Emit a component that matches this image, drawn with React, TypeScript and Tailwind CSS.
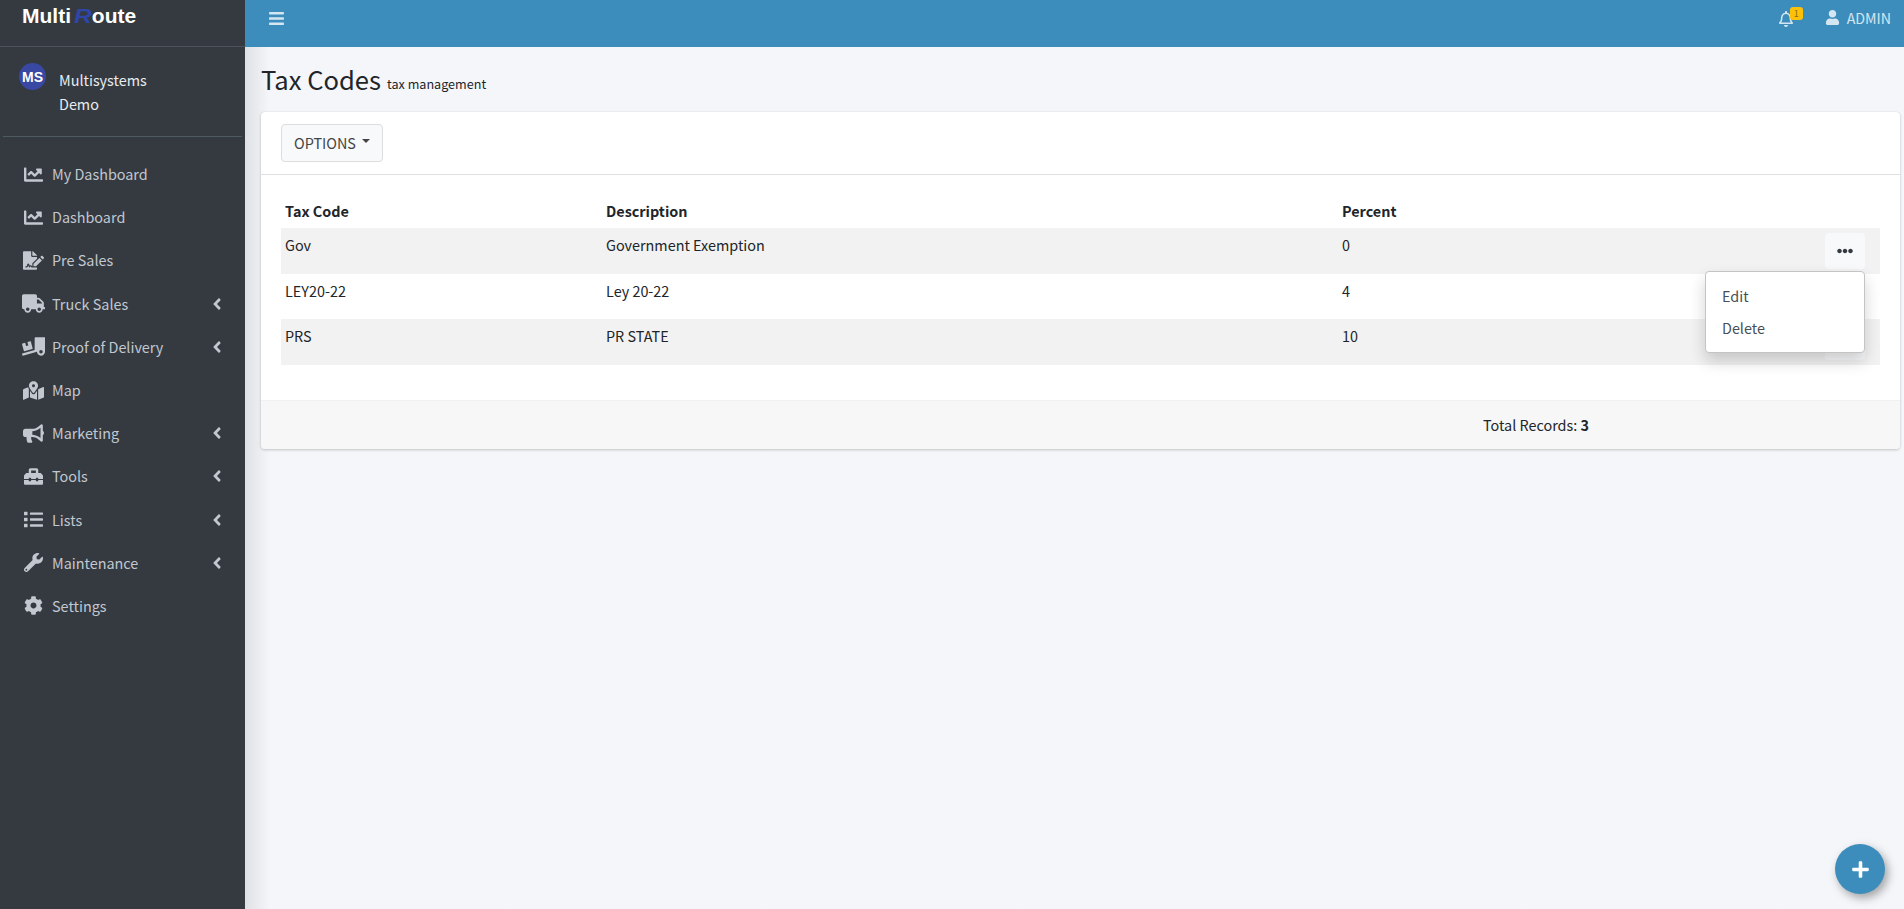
import type { ReactNode } from "react";
import {
  FaAngleLeft,
  FaBars,
  FaBullhorn,
  FaChartLine,
  FaCog,
  FaEllipsisH,
  FaFileSignature,
  FaList,
  FaMapMarkedAlt,
  FaPlus,
  FaRegBell,
  FaToolbox,
  FaTruck,
  FaTruckLoading,
  FaUser,
  FaWrench,
} from "react-icons/fa";

const sans = "font-['Noto_Sans_CJK_SC','Source_Sans_Pro',sans-serif]";

const menu: { label: string; icon: ReactNode; arrow?: boolean }[] = [
  { label: "My Dashboard", icon: <FaChartLine className="text-[19px]" /> },
  { label: "Dashboard", icon: <FaChartLine className="text-[19px]" /> },
  { label: "Pre Sales", icon: <FaFileSignature className="text-[21px]" /> },
  { label: "Truck Sales", icon: <FaTruck className="text-[23px]" />, arrow: true },
  { label: "Proof of Delivery", icon: <FaTruckLoading className="text-[23px]" />, arrow: true },
  { label: "Map", icon: <FaMapMarkedAlt className="text-[21px]" /> },
  { label: "Marketing", icon: <FaBullhorn className="text-[21px]" />, arrow: true },
  { label: "Tools", icon: <FaToolbox className="text-[19px]" />, arrow: true },
  { label: "Lists", icon: <FaList className="text-[19px]" />, arrow: true },
  { label: "Maintenance", icon: <FaWrench className="text-[19px]" />, arrow: true },
  { label: "Settings", icon: <FaCog className="text-[19px]" /> },
];

const rows = [
  { code: "Gov", description: "Government Exemption", percent: "0" },
  { code: "LEY20-22", description: "Ley 20-22", percent: "4" },
  { code: "PRS", description: "PR STATE", percent: "10" },
];

function Sidebar() {
  return (
    <aside className="flex w-[245px] shrink-0 flex-col bg-[#343a40] text-[#c2c7d0]">
      <div className="flex h-[47px] items-start border-b border-[#4b545c] pl-[22px]">
        <span className="font-['Liberation_Sans',sans-serif] text-[21px] font-bold leading-[32px] text-white">
          Multi
          <span className="ml-[3px] mr-[2.7px] inline-block origin-left scale-x-[1.18] italic text-[#2f45a8]">R</span>
          oute
        </span>
      </div>
      <div className="mx-[3px] flex h-[90px] items-start border-b border-[#4f5962] pl-4 pt-4">
        <div className="flex h-[27px] w-[27px] items-center justify-center rounded-full bg-[#3949a3] font-['Liberation_Sans',sans-serif] text-[14px] font-bold leading-none text-white">
          MS
        </div>
        <div className="ml-[13px] mt-[5px] text-[14.4px] leading-[24px] text-[#e9ecef]">
          <div>Multisystems</div>
          <div>Demo</div>
        </div>
      </div>
      <nav className="pt-[15.5px]">
        {menu.map((item) => (
          <div key={item.label} className="flex h-[43.2px] items-center pl-[21.5px] pr-[19.5px]">
            <span className="mr-[7.5px] flex w-[23px] shrink-0 justify-center">{item.icon}</span>
            <span className="text-[14.4px] leading-6">{item.label}</span>
            {item.arrow && <FaAngleLeft className="ml-auto text-[18px]" />}
          </div>
        ))}
      </nav>
    </aside>
  );
}

function TopBar() {
  return (
    <header className="flex h-[47px] shrink-0 items-start bg-[#3c8dbc] pl-[23px] pr-[13px] text-[#d4e6f1]">
      <FaBars className="mt-[10px] text-[17px]" />
      <div className="relative ml-auto mr-[31px] mt-[11px] text-[16px]">
        <FaRegBell />
        <span className="absolute left-[12px] top-[-4px] flex h-[13px] w-[13px] items-center justify-center rounded-[3px] bg-[#ffc107] text-[9px] leading-none text-[#8a6d1a]">
          1
        </span>
      </div>
      <FaUser className="mt-[10px] text-[15px]" />
      <span className="ml-[7px] mt-[6px] text-[14.2px] leading-[24px]">ADMIN</span>
    </header>
  );
}

function TaxTable() {
  return (
    <table className="w-full table-fixed border-collapse text-[14.4px] text-[#212529]">
      <thead>
        <tr className="h-[40px] text-left">
          <th className="w-[321px] px-1 pt-[6px] font-bold">Tax Code</th>
          <th className="w-[736px] px-1 pt-[6px] font-bold">Description</th>
          <th className="px-1 pt-[6px] font-bold">Percent</th>
          <th className="w-[60px]" />
        </tr>
      </thead>
      <tbody>
        {rows.map((row, index) => (
          <tr key={row.code} className={`h-[45.5px] ${index % 2 === 0 ? "bg-[#f2f2f2]" : "bg-white"}`}>
            <td className="px-1 pb-[11px] align-middle leading-6">{row.code}</td>
            <td className="px-1 pb-[11px] align-middle leading-6">{row.description}</td>
            <td className="px-1 pb-[11px] align-middle leading-6">{row.percent}</td>
            <td className="align-middle">
              {index !== 1 && (
                <button className="mr-[15px] ml-auto flex h-[36px] w-[40px] items-center justify-center rounded-[4px] bg-[#f8f9fa] text-[16px] text-[#343a40]">
                  <FaEllipsisH />
                </button>
              )}
            </td>
          </tr>
        ))}
      </tbody>
    </table>
  );
}

export default function App() {
  return (
    <div className={`${sans} flex h-[909px] w-[1904px] overflow-hidden bg-[#f4f6f9]`}>
      <Sidebar />
      <main className="relative flex min-w-0 flex-1 flex-col">
        <TopBar />
        <div className="flex-1 bg-gradient-to-r from-[#dfe1e5] from-0% to-[#f4f6f9] to-[1.5%] pl-4 pr-1">
          <div className="flex h-[65px] items-end pb-[16px] text-[#212529]">
            <h1 className="text-[25.6px] font-normal leading-[34px]">Tax Codes</h1>
            <small className="ml-[6px] text-[12.6px] leading-[24px]">tax management</small>
          </div>
          <section className="relative rounded-[4px] bg-white shadow-[0_0_1px_rgba(0,0,0,0.13),0_1px_3px_rgba(0,0,0,0.2)]">
            <div className="flex h-[63px] items-center border-b border-[#dfdfdf] pl-5">
              <button className="flex h-[38px] items-center rounded-[4px] border border-[#ddd] bg-[#f8f9fa] pl-3 pr-[12px] text-[14.4px] leading-6 text-[#444]">
                OPTIONS
                <span className="ml-[6px] mb-[4px] h-0 w-0 border-x-[4px] border-t-[4.5px] border-x-transparent border-t-[#444]" />
              </button>
            </div>
            <div className="h-[225px] pt-[13px] pl-5 pr-5">
              <TaxTable />
            </div>
            <div className="flex h-[49px] items-center rounded-b-[4px] border-t border-[#f0f0f0] bg-[#f7f7f7] pl-[1222px] text-[14.4px] text-[#212529]">
              Total Records:&nbsp;<b>3</b>
            </div>
            <div className="absolute left-[1444px] top-[158.5px] w-[160px] rounded-[4px] border border-[#c4c4c4] bg-white pt-[8.5px] pb-[7.5px] text-[14.4px] text-[#484f56] shadow-[0_8px_16px_rgba(0,0,0,0.18)]">
              <div className="flex h-[32px] items-center px-4">Edit</div>
              <div className="flex h-[32px] items-center px-4">Delete</div>
            </div>
          </section>
        </div>
        <button className="absolute bottom-[15px] right-[19px] flex h-[50px] w-[50px] items-center justify-center rounded-full bg-[#3c8dbc] text-[19px] text-white shadow-[3px_4px_10px_rgba(0,0,0,0.35)]">
          <FaPlus />
        </button>
      </main>
    </div>
  );
}
